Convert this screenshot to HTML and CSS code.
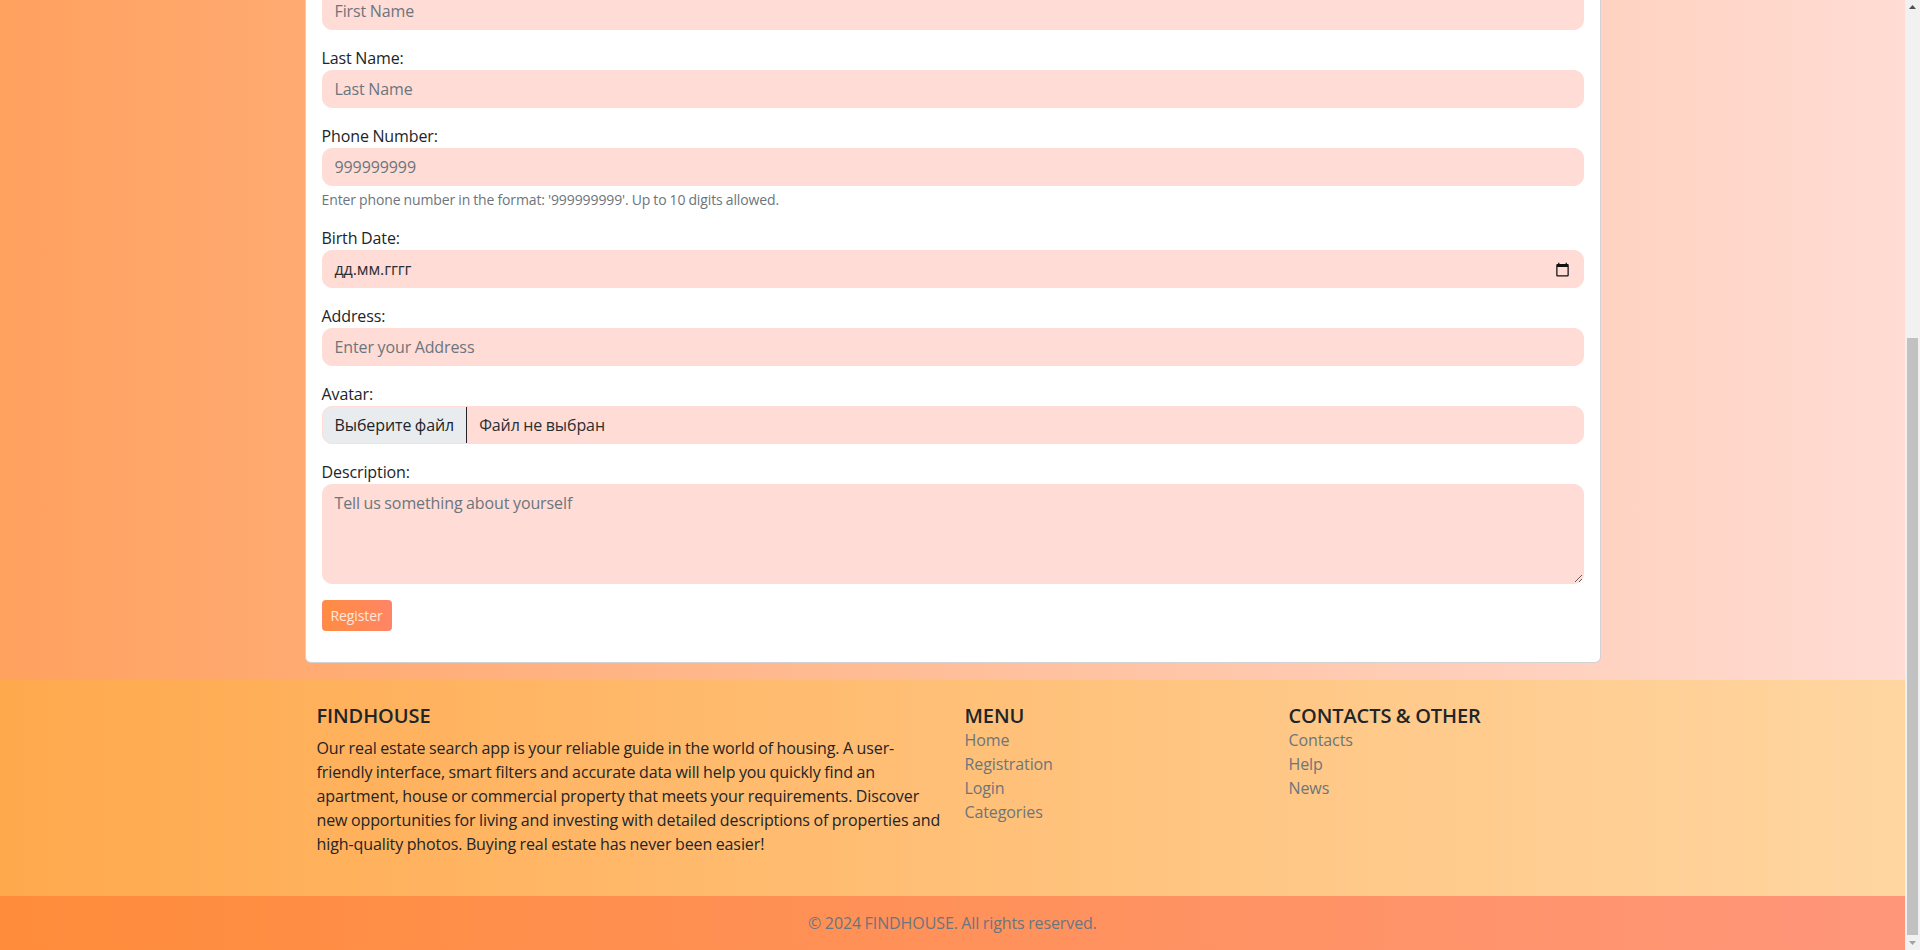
FILE: index.html
```html
<!DOCTYPE html>
<html lang="ru">
<head>
<meta charset="utf-8">
<title>FINDHOUSE — Registration</title>
<link rel="stylesheet" href="styles.css">
</head>
<body>
<div class="screen">
  <div class="viewport">
    <div class="page">
      <main class="main">
        <div class="container">
          <div class="card">
            <div class="card-body">
              <form class="reg-form">
                <div class="field">
                  <label class="field-label" for="first-name">First Name:</label>
                  <input class="form-control" id="first-name" type="text" placeholder="First Name">
                </div>
                <div class="field">
                  <label class="field-label" for="last-name">Last Name:</label>
                  <input class="form-control" id="last-name" type="text" placeholder="Last Name">
                </div>
                <div class="field">
                  <label class="field-label" for="phone">Phone Number:</label>
                  <input class="form-control" id="phone" type="text" placeholder="999999999">
                  <div class="form-text">Enter phone number in the format: '999999999'. Up to 10 digits allowed.</div>
                </div>
                <div class="field">
                  <label class="field-label">Birth Date:</label>
                  <div class="form-control date-control">
                    <span class="date-text">дд.мм.гггг</span>
                    <svg class="calendar-icon" viewBox="0 0 24 24" aria-hidden="true"><path fill="#111" d="M20 3h-1V1h-2v2H7V1H5v2H4c-1.1 0-2 .9-2 2v16c0 1.1.9 2 2 2h16c1.1 0 2-.9 2-2V5c0-1.1-.9-2-2-2zm0 18H4V8h16v13z"/></svg>
                  </div>
                </div>
                <div class="field">
                  <label class="field-label" for="address">Address:</label>
                  <input class="form-control" id="address" type="text" placeholder="Enter your Address">
                </div>
                <div class="field">
                  <label class="field-label">Avatar:</label>
                  <div class="form-control file-control">
                    <span class="file-btn">Выберите файл</span>
                    <span class="file-name">Файл не выбран</span>
                  </div>
                </div>
                <div class="field">
                  <label class="field-label" for="description">Description:</label>
                  <textarea class="form-control textarea-control" id="description" placeholder="Tell us something about yourself"></textarea>
                </div>
                <div class="form-actions">
                  <button class="btn-register" type="submit">Register</button>
                </div>
              </form>
            </div>
          </div>
        </div>
      </main>

      <footer class="site-footer">
        <div class="footer-main">
          <div class="footer-container">
            <div class="footer-row">
              <div class="footer-col footer-col-about">
                <h5 class="footer-title">FINDHOUSE</h5>
                <p class="footer-text">Our real estate search app is your reliable guide in the world of housing. A user-friendly interface, smart filters and accurate data will help you quickly find an apartment, house or commercial property that meets your requirements. Discover new opportunities for living and investing with detailed descriptions of properties and high-quality photos. Buying real estate has never been easier!</p>
              </div>
              <div class="footer-col">
                <h5 class="footer-title footer-title-tight">MENU</h5>
                <ul class="footer-links">
                  <li><a href="#">Home</a></li>
                  <li><a href="#">Registration</a></li>
                  <li><a href="#">Login</a></li>
                  <li><a href="#">Categories</a></li>
                </ul>
              </div>
              <div class="footer-col">
                <h5 class="footer-title footer-title-tight">CONTACTS &amp; OTHER</h5>
                <ul class="footer-links">
                  <li><a href="#">Contacts</a></li>
                  <li><a href="#">Help</a></li>
                  <li><a href="#">News</a></li>
                </ul>
              </div>
            </div>
          </div>
        </div>
        <div class="footer-bottom">© 2024 FINDHOUSE. All rights reserved.</div>
      </footer>
    </div>
  </div>

  <div class="scrollbar" aria-hidden="true">
    <div class="sb-btn">
      <svg viewBox="0 0 15 15" width="15" height="15"><polygon points="4,9 11,9 7.5,5" fill="#505050"/></svg>
    </div>
    <div class="sb-track">
      <div class="sb-thumb"></div>
    </div>
    <div class="sb-btn">
      <svg viewBox="0 0 15 15" width="15" height="15"><polygon points="4,6 11,6 7.5,10" fill="#a3a3a3"/></svg>
    </div>
  </div>
</div>
</body>
</html>
```

FILE: styles.css
```css
*,
*::before,
*::after {
  box-sizing: border-box;
}

html,
body {
  margin: 0;
  height: 100%;
  overflow: hidden;
}

body {
  font-family: "Open Sans", "Noto Sans", "Liberation Sans", sans-serif;
  font-size: 16px;
  line-height: 1.5;
  letter-spacing: -0.1px;
  word-spacing: -0.5px;
  color: #212529;
}

/* window: page area + browser scrollbar */
.screen {
  display: flex;
  height: 100vh;
}

.viewport {
  flex: 1;
  min-width: 0;
  overflow: hidden;
  display: flex;
  flex-direction: column;
  justify-content: flex-end;
  background: linear-gradient(to right, #ffa15f, #ffdcd4);
}

.page {
  flex: none;
}

.scrollbar {
  flex: none;
  width: 15px;
  display: flex;
  flex-direction: column;
  background: #f1f1f1;
}

.sb-btn {
  flex: none;
  height: 15px;
}

.sb-btn svg {
  display: block;
}

.sb-track {
  flex: 1;
  display: flex;
  flex-direction: column;
  justify-content: flex-end;
  padding: 0 2px;
}

.sb-thumb {
  height: 597px;
  background: #c1c1c1;
}

/* main */
.main {
  padding: 24px 0 17px;
}

.container {
  max-width: 1320px;
  margin: 0 auto;
  padding: 0 12px;
}

.card {
  background: #fff;
  border: 1px solid rgba(0, 0, 0, 0.175);
  border-radius: 6px;
}

.card-body {
  padding: 16px;
}

.reg-form {
  margin: 0;
}

.field {
  margin-bottom: 16px;
}

.field-label {
  display: block;
  color: #212529;
}

.form-control {
  display: block;
  width: 100%;
  padding: 6px 12px;
  font-family: inherit;
  font-size: 16px;
  line-height: 24px;
  letter-spacing: inherit;
  word-spacing: inherit;
  color: #212529;
  background: #ffdcd5;
  border: 1px solid #ffdcd5;
  border-radius: 10px;
  outline: none;
}

.form-control::placeholder {
  color: #6c757d;
  opacity: 1;
}

.form-text {
  margin-top: 3px;
  font-size: 14px;
  line-height: 21px;
  color: #6c757d;
}

.date-control {
  display: flex;
  align-items: center;
  justify-content: space-between;
}

.date-text {
  color: #2b2f33;
}

.calendar-icon {
  width: 15px;
  height: 15px;
  flex: none;
  margin-right: 1px;
}

.file-control {
  display: flex;
  padding: 0;
  overflow: hidden;
}

.file-btn {
  padding: 6px 12px;
  background: #e9ecef;
  border-right: 1px solid #212529;
}

.file-name {
  padding: 6px 12px;
  color: #2b2f33;
}

.textarea-control {
  height: 100px;
  resize: vertical;
}

.form-actions {
  margin-bottom: 15px;
}

.btn-register {
  font-family: inherit;
  font-size: 14px;
  line-height: 21px;
  letter-spacing: inherit;
  padding: 4px 8px;
  border: 1px solid transparent;
  border-radius: 4px;
  color: #ffe8da;
  background: linear-gradient(to right, #ff8c42, #ff8565);
  cursor: pointer;
}

/* footer */
.footer-main {
  background: linear-gradient(to right, #ffa94d, #ffd6a1);
}

.footer-container {
  max-width: 1320px;
  margin: 0 auto;
  padding: 24px;
}

.footer-row {
  display: flex;
  margin: 0 -12px;
}

.footer-col {
  flex: 0 0 25%;
  padding: 0 12px;
}

.footer-col-about {
  flex-basis: 50%;
}

.footer-title {
  margin: 0 0 8px;
  font-size: 20px;
  line-height: 1.2;
  font-weight: 600;
  color: #212529;
}

.footer-title-tight {
  margin-bottom: 0;
}

.footer-text {
  margin: 0 0 16px;
}

.footer-links {
  list-style: none;
  margin: 0;
  padding: 0;
}

.footer-links a {
  color: #6c757d;
  text-decoration: none;
}

.footer-bottom {
  padding: 15px 0;
  text-align: center;
  color: #6c757d;
  background: linear-gradient(to right, #ff8c3a, #ff967a);
}
```
